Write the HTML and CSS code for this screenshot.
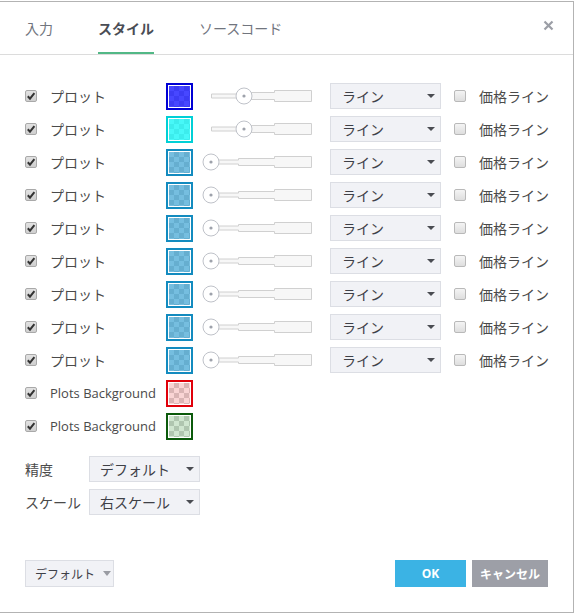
FILE: index.html
```html
<!DOCTYPE html>
<html lang="ja">
<head>
<meta charset="utf-8">
<link rel="stylesheet" href="styles.css">
</head>
<body>
<div class="dialog">
  <div class="header">
    <div class="tab">入力</div>
    <div class="tab active">スタイル</div>
    <div class="tab">ソースコード</div>
    <svg class="close" width="11" height="11" viewBox="0 0 11 11"><path d="M1.5 1.5 L9.5 9.5 M9.5 1.5 L1.5 9.5" stroke="#9b9ea6" stroke-width="2.2" stroke-linecap="butt"/></svg>
  </div>

  <div class="content">
    <div class="row">
      <span class="cb checked"><svg width="10" height="10" viewBox="0 0 10 10"><path d="M1.8 5.2 L4 7.6 L8.4 2.2" fill="none" stroke="#333" stroke-width="2"/></svg></span>
      <span class="label">プロット</span>
      <span class="swatch sw-blue"></span>
      <svg class="slider" width="110" height="26" viewBox="0 0 110 26"><polygon points="9.5,11 36.5,11 36.5,9.5 72.5,9.5 72.5,7.5 109.5,7.5 109.5,18.5 72.5,18.5 72.5,16.5 36.5,16.5 36.5,15 9.5,15" fill="#f7f7f7" stroke="#d0d0d0"/><circle cx="42" cy="13" r="8" fill="#fff" stroke="#bfc2c9"/><circle cx="42" cy="13" r="1.6" fill="#9ea2ab"/></svg>
      <span class="select wide"><span>ライン</span><i class="arrow"></i></span>
      <span class="cb"></span>
      <span class="label2">価格ライン</span>
    </div>
    <div class="row">
      <span class="cb checked"><svg width="10" height="10" viewBox="0 0 10 10"><path d="M1.8 5.2 L4 7.6 L8.4 2.2" fill="none" stroke="#333" stroke-width="2"/></svg></span>
      <span class="label">プロット</span>
      <span class="swatch sw-cyan"></span>
      <svg class="slider" width="110" height="26" viewBox="0 0 110 26"><polygon points="9.5,11 36.5,11 36.5,9.5 72.5,9.5 72.5,7.5 109.5,7.5 109.5,18.5 72.5,18.5 72.5,16.5 36.5,16.5 36.5,15 9.5,15" fill="#f7f7f7" stroke="#d0d0d0"/><circle cx="42" cy="13" r="8" fill="#fff" stroke="#bfc2c9"/><circle cx="42" cy="13" r="1.6" fill="#9ea2ab"/></svg>
      <span class="select wide"><span>ライン</span><i class="arrow"></i></span>
      <span class="cb"></span>
      <span class="label2">価格ライン</span>
    </div>
    <div class="row">
      <span class="cb checked"><svg width="10" height="10" viewBox="0 0 10 10"><path d="M1.8 5.2 L4 7.6 L8.4 2.2" fill="none" stroke="#333" stroke-width="2"/></svg></span>
      <span class="label">プロット</span>
      <span class="swatch sw-steel"></span>
      <svg class="slider" width="110" height="26" viewBox="0 0 110 26"><polygon points="9.5,11 36.5,11 36.5,9.5 72.5,9.5 72.5,7.5 109.5,7.5 109.5,18.5 72.5,18.5 72.5,16.5 36.5,16.5 36.5,15 9.5,15" fill="#f7f7f7" stroke="#d0d0d0"/><circle cx="9" cy="13" r="8" fill="#fff" stroke="#bfc2c9"/><circle cx="9" cy="13" r="1.6" fill="#9ea2ab"/></svg>
      <span class="select wide"><span>ライン</span><i class="arrow"></i></span>
      <span class="cb"></span>
      <span class="label2">価格ライン</span>
    </div>
    <div class="row">
      <span class="cb checked"><svg width="10" height="10" viewBox="0 0 10 10"><path d="M1.8 5.2 L4 7.6 L8.4 2.2" fill="none" stroke="#333" stroke-width="2"/></svg></span>
      <span class="label">プロット</span>
      <span class="swatch sw-steel"></span>
      <svg class="slider" width="110" height="26" viewBox="0 0 110 26"><polygon points="9.5,11 36.5,11 36.5,9.5 72.5,9.5 72.5,7.5 109.5,7.5 109.5,18.5 72.5,18.5 72.5,16.5 36.5,16.5 36.5,15 9.5,15" fill="#f7f7f7" stroke="#d0d0d0"/><circle cx="9" cy="13" r="8" fill="#fff" stroke="#bfc2c9"/><circle cx="9" cy="13" r="1.6" fill="#9ea2ab"/></svg>
      <span class="select wide"><span>ライン</span><i class="arrow"></i></span>
      <span class="cb"></span>
      <span class="label2">価格ライン</span>
    </div>
    <div class="row">
      <span class="cb checked"><svg width="10" height="10" viewBox="0 0 10 10"><path d="M1.8 5.2 L4 7.6 L8.4 2.2" fill="none" stroke="#333" stroke-width="2"/></svg></span>
      <span class="label">プロット</span>
      <span class="swatch sw-steel"></span>
      <svg class="slider" width="110" height="26" viewBox="0 0 110 26"><polygon points="9.5,11 36.5,11 36.5,9.5 72.5,9.5 72.5,7.5 109.5,7.5 109.5,18.5 72.5,18.5 72.5,16.5 36.5,16.5 36.5,15 9.5,15" fill="#f7f7f7" stroke="#d0d0d0"/><circle cx="9" cy="13" r="8" fill="#fff" stroke="#bfc2c9"/><circle cx="9" cy="13" r="1.6" fill="#9ea2ab"/></svg>
      <span class="select wide"><span>ライン</span><i class="arrow"></i></span>
      <span class="cb"></span>
      <span class="label2">価格ライン</span>
    </div>
    <div class="row">
      <span class="cb checked"><svg width="10" height="10" viewBox="0 0 10 10"><path d="M1.8 5.2 L4 7.6 L8.4 2.2" fill="none" stroke="#333" stroke-width="2"/></svg></span>
      <span class="label">プロット</span>
      <span class="swatch sw-steel"></span>
      <svg class="slider" width="110" height="26" viewBox="0 0 110 26"><polygon points="9.5,11 36.5,11 36.5,9.5 72.5,9.5 72.5,7.5 109.5,7.5 109.5,18.5 72.5,18.5 72.5,16.5 36.5,16.5 36.5,15 9.5,15" fill="#f7f7f7" stroke="#d0d0d0"/><circle cx="9" cy="13" r="8" fill="#fff" stroke="#bfc2c9"/><circle cx="9" cy="13" r="1.6" fill="#9ea2ab"/></svg>
      <span class="select wide"><span>ライン</span><i class="arrow"></i></span>
      <span class="cb"></span>
      <span class="label2">価格ライン</span>
    </div>
    <div class="row">
      <span class="cb checked"><svg width="10" height="10" viewBox="0 0 10 10"><path d="M1.8 5.2 L4 7.6 L8.4 2.2" fill="none" stroke="#333" stroke-width="2"/></svg></span>
      <span class="label">プロット</span>
      <span class="swatch sw-steel"></span>
      <svg class="slider" width="110" height="26" viewBox="0 0 110 26"><polygon points="9.5,11 36.5,11 36.5,9.5 72.5,9.5 72.5,7.5 109.5,7.5 109.5,18.5 72.5,18.5 72.5,16.5 36.5,16.5 36.5,15 9.5,15" fill="#f7f7f7" stroke="#d0d0d0"/><circle cx="9" cy="13" r="8" fill="#fff" stroke="#bfc2c9"/><circle cx="9" cy="13" r="1.6" fill="#9ea2ab"/></svg>
      <span class="select wide"><span>ライン</span><i class="arrow"></i></span>
      <span class="cb"></span>
      <span class="label2">価格ライン</span>
    </div>
    <div class="row">
      <span class="cb checked"><svg width="10" height="10" viewBox="0 0 10 10"><path d="M1.8 5.2 L4 7.6 L8.4 2.2" fill="none" stroke="#333" stroke-width="2"/></svg></span>
      <span class="label">プロット</span>
      <span class="swatch sw-steel"></span>
      <svg class="slider" width="110" height="26" viewBox="0 0 110 26"><polygon points="9.5,11 36.5,11 36.5,9.5 72.5,9.5 72.5,7.5 109.5,7.5 109.5,18.5 72.5,18.5 72.5,16.5 36.5,16.5 36.5,15 9.5,15" fill="#f7f7f7" stroke="#d0d0d0"/><circle cx="9" cy="13" r="8" fill="#fff" stroke="#bfc2c9"/><circle cx="9" cy="13" r="1.6" fill="#9ea2ab"/></svg>
      <span class="select wide"><span>ライン</span><i class="arrow"></i></span>
      <span class="cb"></span>
      <span class="label2">価格ライン</span>
    </div>
    <div class="row">
      <span class="cb checked"><svg width="10" height="10" viewBox="0 0 10 10"><path d="M1.8 5.2 L4 7.6 L8.4 2.2" fill="none" stroke="#333" stroke-width="2"/></svg></span>
      <span class="label">プロット</span>
      <span class="swatch sw-steel"></span>
      <svg class="slider" width="110" height="26" viewBox="0 0 110 26"><polygon points="9.5,11 36.5,11 36.5,9.5 72.5,9.5 72.5,7.5 109.5,7.5 109.5,18.5 72.5,18.5 72.5,16.5 36.5,16.5 36.5,15 9.5,15" fill="#f7f7f7" stroke="#d0d0d0"/><circle cx="9" cy="13" r="8" fill="#fff" stroke="#bfc2c9"/><circle cx="9" cy="13" r="1.6" fill="#9ea2ab"/></svg>
      <span class="select wide"><span>ライン</span><i class="arrow"></i></span>
      <span class="cb"></span>
      <span class="label2">価格ライン</span>
    </div>
    <div class="row">
      <span class="cb checked"><svg width="10" height="10" viewBox="0 0 10 10"><path d="M1.8 5.2 L4 7.6 L8.4 2.2" fill="none" stroke="#333" stroke-width="2"/></svg></span>
      <span class="label latin">Plots Background</span>
      <span class="swatch sw-red"></span>
    </div>
    <div class="row">
      <span class="cb checked"><svg width="10" height="10" viewBox="0 0 10 10"><path d="M1.8 5.2 L4 7.6 L8.4 2.2" fill="none" stroke="#333" stroke-width="2"/></svg></span>
      <span class="label latin">Plots Background</span>
      <span class="swatch sw-green"></span>
    </div>

    <div class="props">
      <div class="prop">
        <span class="plabel">精度</span>
        <span class="select narrow"><span>デフォルト</span><i class="arrow"></i></span>
      </div>
      <div class="prop">
        <span class="plabel">スケール</span>
        <span class="select narrow"><span>右スケール</span><i class="arrow"></i></span>
      </div>
    </div>
  </div>

  <div class="footer">
    <span class="defbtn">デフォルト<i class="arrow gray"></i></span>
    <span class="spacer"></span>
    <span class="btn ok">OK</span>
    <span class="btn cancel">キャンセル</span>
  </div>
</div>
</body>
</html>
```

FILE: styles.css
```css
* { box-sizing: border-box; }
html, body { margin: 0; padding: 0; background: #fff; }
body {
  font-family: "Open Sans", "Noto Sans CJK JP", sans-serif;
  font-size: 14px;
  color: #4a4a4a;
  overflow: hidden;
}
.dialog {
  margin: 1px 0 0 -1px;
  width: 575px;
  height: 612px;
  border: 1px solid #b3b3b3;
  display: flex;
  flex-direction: column;
  background: #fff;
}
.header {
  position: relative;
  height: 53px;
  border-bottom: 1px solid #dcdcdc;
  display: flex;
  align-items: stretch;
  padding-left: 25px;
  gap: 45px;
}
.tab {
  display: flex;
  align-items: center;
  font-family: "Noto Sans CJK JP", sans-serif;
  font-size: 14px;
  color: #71757e;
  padding-top: 1px;
  border-bottom: 2px solid transparent;
}
.tab.active {
  font-weight: bold;
  color: #4a4d55;
  border-bottom-color: #52b886;
}
.close {
  position: absolute;
  right: 19px;
  top: 18px;
}
.content {
  padding: 28px 0 0 25px;
  display: flex;
  flex-direction: column;
  gap: 7px;
}
.row {
  height: 26px;
  display: flex;
  align-items: center;
}
.cb {
  width: 12px;
  height: 12px;
  flex: none;
  border: 1px solid #b9b9b9;
  border-radius: 2px;
  background: linear-gradient(#f4f4f4, #dedede);
  display: flex;
  align-items: center;
  justify-content: center;
}
.cb.checked { background: linear-gradient(#e2e2e2, #cfcfcf); border-color: #a9a9a9; }
.cb svg { display: block; }
.label {
  width: 116px;
  margin-left: 13px;
  font-family: "Noto Sans CJK JP", sans-serif;
  white-space: nowrap;
  margin-top: -1px;
}
.label.latin { font-family: "Open Sans", sans-serif; font-size: 13px; }
.swatch {
  width: 27px;
  height: 27px;
  flex: none;
  border: 2px solid;
  box-shadow: inset 0 0 0 1px #fff;
  background-size: 100% 100%, 10px 10px;
  background-position: 0 0, 1px 1px;
}
.sw-blue {
  border-color: #0000d4;
  background-image: linear-gradient(rgba(0,0,255,.72), rgba(0,0,255,.72)), conic-gradient(#d6d6d6 25%, #fff 0 50%, #d6d6d6 0 75%, #fff 0);
}
.sw-cyan {
  border-color: #00d0d6;
  background-image: linear-gradient(rgba(0,245,245,.72), rgba(0,245,245,.72)), conic-gradient(#d6d6d6 25%, #fff 0 50%, #d6d6d6 0 75%, #fff 0);
}
.sw-steel {
  border-color: #138bbf;
  background-image: linear-gradient(rgba(33,150,204,.62), rgba(33,150,204,.62)), conic-gradient(#d6d6d6 25%, #fff 0 50%, #d6d6d6 0 75%, #fff 0);
}
.sw-red {
  border-color: #e0000a;
  background-image: linear-gradient(rgba(230,60,60,.22), rgba(230,60,60,.22)), conic-gradient(#d6d6d6 25%, #fff 0 50%, #d6d6d6 0 75%, #fff 0);
}
.sw-green {
  border-color: #0b5a0b;
  background-image: linear-gradient(rgba(40,140,40,.22), rgba(40,140,40,.22)), conic-gradient(#d6d6d6 25%, #fff 0 50%, #d6d6d6 0 75%, #fff 0);
}
.slider { margin-left: 9px; flex: none; display: block; }
.select {
  height: 26px;
  flex: none;
  background: #f1f2f6;
  border: 1px solid #dcdee4;
  display: flex;
  align-items: center;
  justify-content: space-between;
  font-family: "Noto Sans CJK JP", sans-serif;
  font-size: 14px;
  color: #3e4047;
  padding: 0 5px 0 11px;
}
.select.wide { width: 111px; margin-left: 18px; }
.select.narrow { width: 111px; padding-left: 10px; }
.arrow {
  width: 0;
  height: 0;
  border-left: 4px solid transparent;
  border-right: 4px solid transparent;
  border-top: 4px solid #4a4c52;
}
.arrow.gray { border-top-color: #9a9ca3; border-left-width: 4.5px; border-right-width: 4.5px; border-top-width: 5px; }
.row .cb:not(.checked) { margin-left: 13px; }
.label2 {
  margin-left: 13px;
  font-family: "Noto Sans CJK JP", sans-serif;
  white-space: nowrap;
  margin-top: -1px;
}
.props {
  margin-top: 10px;
  display: flex;
  flex-direction: column;
  gap: 7px;
}
.prop { display: flex; align-items: center; height: 26px; }
.plabel {
  width: 64px;
  font-family: "Noto Sans CJK JP", sans-serif;
  color: #4a4a4a;
}
.footer {
  margin-top: auto;
  padding: 0 25px 25px 25px;
  display: flex;
  align-items: center;
  gap: 6px;
}
.spacer { flex: 1; }
.defbtn {
  width: 89px;
  height: 27px;
  background: #f1f2f6;
  border: 1px solid #dcdee4;
  display: flex;
  align-items: center;
  gap: 8px;
  padding-left: 9px;
  font-family: "Noto Sans CJK JP", sans-serif;
  font-size: 12px;
  color: #3e4047;
}
.btn {
  height: 27px;
  display: flex;
  align-items: center;
  justify-content: center;
  color: #fff;
  font-weight: bold;
  font-size: 12px;
  font-family: "Open Sans", "Noto Sans CJK JP", sans-serif;
}
.btn.ok { width: 71px; background: #3bb3e4; }
.btn.cancel { width: 76px; background: #9d9fa7; font-family: "Noto Sans CJK JP", sans-serif; }
```
